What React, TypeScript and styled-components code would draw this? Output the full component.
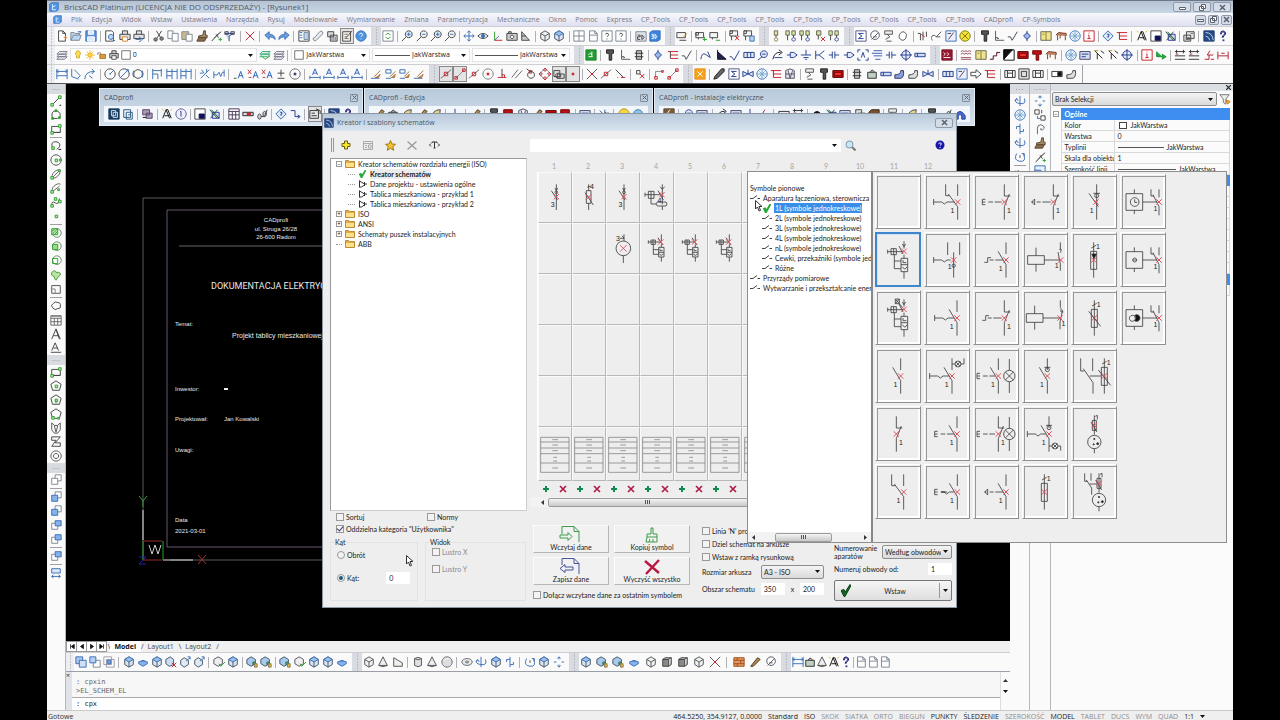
import React from 'react';
import styled, { createGlobalStyle, css } from 'styled-components';

const Global = createGlobalStyle`
  * { box-sizing: border-box; }
  body { margin: 0; background: #000; font: 7px/10px "Open Sans", "Noto Sans", sans-serif; color: #333; overflow: hidden; }
  button, input, select { font: inherit; color: inherit; margin: 0; padding: 0; border: 0; background: none; border-radius: 0; }
  svg { display: block; flex: none; }
`;
const dialogFont = 'Lato, "Liberation Sans", Arial, sans-serif';

/* ---------- Toolbar glyphs, drawn on a 14 x 14 field: [path, stroke, fill] ---------- */
type Part = [string, string, string?];
const K = '#444', B = '#3a6fb5', N = '#223f8f', R = '#c8202c', GR = '#2fa02f', Y = '#e8b93c', S = '#7d8794', LB = '#bcd6f2';
const n = 'none';
const glyphs: Record<string, Part[]> = {
  new: [['M3 1h5l3 3v9h-8zM8 1v3h3', K, '#fff'], ['M9 9l4 0M11 7v4', '#e07b1c']],
  open: [['M1 12V3h4l1 1h5v2M1 12l3-6h9l-2 6z', S, LB], ['M9 2h4l-2 2', B]],
  save: [['M1 1h12v12H1z', B, '#5b93d8'], ['M4 1h6v4H4zM3 8h8v5H3z', '#fff', '#dbe9fa']],
  preview: [['M2 1h7l2 2v10H2z', K, '#fff'], ['M8 5a3 3 0 1 0 .1 0M10 10l3 3', B, LB]],
  print: [['M4 5V1h6v4M1 5h12v6H1z', K, '#dde1e6'], ['M4 8h6v5H4z', '#d9822b', '#fff']],
  plot: [['M4 5V1h6v4M1 5h12v5H1z', K, '#dde1e6'], ['M3 11h6M7 8l4 3-4 3', B]],
  cut: [['M4 1l5 8M10 1L5 9', K], ['M3 9a2 2 0 1 0 .1 0M10 8a2 2 0 1 0 .1 0', K, '#888']],
  copy: [['M1 1h6v9H1z', S, '#fff'], ['M6 4h7v9H6z', S, '#fff']],
  paste: [['M1 2h8v9H1z', S, '#cdb98c'], ['M6 5h7v8H6z', S, '#fff']],
  brush: [['M9 1l2 0v5h2v3H3V7l5-1z', '#5a4633', '#a58a6a'], ['M3 9h9l-2 4H1z', '#5a4633', '#8b6c4b']],
  eyedrop: [['M13 2L8 6l-6 7M7 5l3 4', K, K], ['M10 11h4M12 9v4', GR]],
  selsim: [['M1 2h4v3H1zM8 2h4v3H8zM1 4h10L6 7v6', '#446', LB]],
  filter: [['M1 2h11L8 7v6l-3-2V7z', '#777', '#eee'], ['M8 8l5 2-3 3z', '#c87a1c', Y]],
  del: [['M2 2l10 10M12 2L2 12', R]],
  undo: [['M1 6l5-4v3c4 0 7 2 7 6-2-2-4-3-7-3v3z', B, '#6ca0dd']],
  redo: [['M13 6L8 2v3c-4 0-7 2-7 6 2-2 4-3 7-3v3z', B, '#6ca0dd']],
  prop: [['M1 1h12v12H1z', K, '#fff'], ['M2 3h3M2 6h3M2 9h3', B], ['M7 3h5v8H7z', S, LB]],
  clip: [['M3 9l6-7a2 2 0 0 1 3 3l-7 7a2 2 0 0 1-3-3z', S, '#e8eaed']],
  sheet: [['M2 2h7v6H2zM5 6h8v7H5z', K, '#ddd'], ['M7 8v4M9 8v4M11 8v4', S]],
  note: [['M2 2h9v11H2z', K, '#f4f4f4'], ['M4 5h4M4 8h3M4 10h5', '#775'], ['M13 1L6 9', '#543']],
  help: [['M7 1a6 6 0 1 0 .1 0', B, '#4f93e0'], ['M5 5q2-3 4 0q0 1-2 3M7 10v1', '#fff']],
  refresh: [['M1 1h12v12H1z', S, '#fff'], ['M4 6q3-4 6 0M10 8q-3 4-6 0', GR]],
  zoom: [['M9 1a4 4 0 1 0 .1 0M6 8l-5 5', K, '#dce9f8'], ['M7 5h4M9 3v4', B]],
  zoomo: [['M9 1a4 4 0 1 0 .1 0M6 8l-5 5', K, '#f4f7fa'], ['M7 5h4', B]],
  pan: [['M7 1v12M1 7h12M5 3l2-2 2 2M5 11l2 2 2-2M3 5L1 7l2 2M11 5l2 2-2 2', B]],
  eye: [['M1 7q6-6 12 0q-6 6-12 0', K, '#fff'], ['M7 5a2 2 0 1 0 .1 0', B, B]],
  ucs: [['M3 12V2', GR], ['M3 12h9', R], ['M3 12l5-5', B]],
  cam: [['M1 4h12v8H1zM3 4V2h3v2', K, '#ccc'], ['M7 6a2 2 0 1 0 .1 0', K, '#fff']],
  camd: [['M2 12V2l9 10zM2 7h5', K, '#ccc']],
  cube: [['M7 1l5 3v6l-5 3-5-3V4z', '#555', '#eef1f4'], ['M2 4l5 3 5-3M7 7v6', '#555']],
  cubeb: [['M7 1l5 3v6l-5 3-5-3V4z', '#456', '#dce6f3'], ['M2 4l5-3 5 3-5 3z', B, '#9dc0ea'], ['M7 7v6', '#456']],
  cubec: [['M6 1l5 3v5l-5 3-5-3V4z', '#456', '#a9c8ef'], ['M8 7h3v3H8z', '#375', '#4a9a5a'], ['M10 9h3v4h-3z', '#875', Y]],
  cubex: [['M6 1l4 3v6l-5 2-4-3V4z', '#456', '#cdddf2'], ['M8 8l5 5M13 8l-5 5', R]],
  cubeg: [['M6 1l5 3v5l-5 3-5-3V4z', '#556', '#eee'], ['M7 9l2 3 5-5', GR]],
  cubea: [['M6 2l5 3v5l-5 3-4-3V5z', '#456', '#e2eaf4'], ['M8 6l5-4M10 1h3v3', B]],
  win: [['M1 1h12v12H1zM7 1v12M1 7h12', S, '#fff']],
  page: [['M3 1h6l3 3v9H3zM3 6h9M9 1v3h3', S, '#fff']],
  ask: [['M1 1h12v12H1z', S, '#fff'], ['M5 5q2-3 4 0q0 1-2 3M7 10v1', K]],
  d2: [['M1 2h12v11H1z', S, '#dfe3e8'], ['M3 6h3v2H3v3h3M8 6v5q5-2 0-5', K]],
  d3: [['M1 3l3-2h9v10l-3 2H1z', B, '#3c84dc'], ['M3 5h2v5H3M3 7h2M7 5v5q4-2 0-5', '#fff']],
  brand: [['M1 3l3-2h9v10l-3 2H1z', B, '#4f96e8'], ['M5 3v8h5M5 7l4-2', '#fff']],
  layp: [['M1 3h10v6H1zM4 12h8', K, '#f6f6f6'], ['M8 9l5-5', '#c89138']],
  laya: [['M1 3h9v6H1zM1 3h3v3H1zM4 9v2', K, '#f6f6f6'], ['M9 11h5M11 8v5', GR]],
  laym: [['M1 3h9v6H1zM4 9v2', K, '#f6f6f6'], ['M8 12h5', GR]],
  layx: [['M1 1h9v6H1zM1 1h3v3H1M3 7v5', K, '#f6f6f6'], ['M7 7l5 5M12 7l-5 5', R]],
  layb: [['M1 1h9v6H1zM1 1h3v3H1M3 7v5', K, '#f6f6f6'], ['M8 7h5v6H8z', B, LB]],
  attach: [['M5 1h4v5H5z', '#665', '#eee5a0'], ['M7 6v3', K], ['M7 9a2 2 0 1 0 .1 0', '#874', '#fff']],
  attach2: [['M1 1h4v5H1zM8 1h4v5H8z', '#665', '#d6e8a8'], ['M3 6v6M10 6v3', K], ['M10 9a2 2 0 1 0 .1 0', N, '#fff']],
  attachx: [['M3 1h5v5H3z', '#665', '#cfe2a0'], ['M5 6v5', K], ['M8 8l5 5M13 8l-5 5', R]],
  sigma: [['M1 1h12v12H1z', '#558', '#fff'], ['M10 4H4l4 3-4 3h6', N]],
  gauge: [['M7 1a5 5 0 1 0 .1 0M3 11l8-8M5 8h4', '#556', '#fff']],
  mesh: [['M2 1h9v4H2zM5 5l3 3-5 3M4 13h6', '#555', '#eee']],
  mask: [['M3 5q4-6 8 0q0 7-5 7q-5-2-3-7', '#555', '#fff']],
  wire: [['M1 4h3v8M7 2v10M11 2v6', K], ['M5 5l4 3', R]],
  spoon: [['M2 12a3 3 0 1 1 4-4L12 2M6 8h5', '#555', '#fff']],
  tag: [['M1 1h12v12H1z', B, '#eef'], ['M4 11l6-8M3 4h4', K]],
  lampy: [['M7 1a6 6 0 1 0 .1 0', '#770', '#f6e23a'], ['M3 3l8 8M11 3l-8 8', '#770']],
  bolt: [['M3 1h8v4H9v8H6V5H3z', '#222', '#555']],
  angle: [['M3 1v11h10M5 10h2M3 9h3', '#555']],
  tick: [['M1 8h3l2 4L12 2', '#445']],
  dia: [['M7 1v12', N], ['M7 3l4 4-4 4-4-4z', N, '#9db7e8']],
  yel: [['M1 2h12v10H1z', '#665', '#efe48a'], ['M7 2v10M3 5h2', '#874']],
  table: [['M1 6l3-3 9 1v3M3 6v6M12 7v5M6 6v4', '#7a3b22', '#c08060']],
  fan: [['M7 1a6 6 0 1 0 .1 0', B, '#eaf3fb'], ['M7 2v10M2 7h10M4 4l6 6M10 4l-6 6', '#7aa6cc']],
  info: [['M1 1h12v12H1z', R, '#fff'], ['M7 3v1M6 6h1v4M5 10h4', R]],
  qdia: [['M7 1l6 6-6 6-6-6z', B, '#dbe8f7'], ['M6 5h2v2H7v2', N]],
  lines: [['M1 3h12M4 7h9M4 11h9', R], ['M4 3v8', K]],
  A: [['M2 12L6 2h2l4 10M4 9h6M6 2l4 10', '#111'], ['M1 1l2 2M13 1l-2 2', Y]],
  pip: [['M1 1h12v12H1z', K, '#fff'], ['M6 7h6v5H6z', '#115', '#115']],
  xls: [['M5 5h8v7H5z', '#33a', '#dde'], ['M2 2l9 10M4 2l9 10M11 2L3 12', '#175a34']],
  calc: [['M4 2h9v8H4zM1 6h8v7H1z', '#444', '#e6e6e6'], ['M9 4h3M3 9h5M3 11h5', '#666']],
  logo: [['M1 1h12v12H1z', '#1f3b70', '#264a86'], ['M3 3q8 0 9 9M3 7q4 1 5 5', '#c6d6ee']],
  q: [['M4 5q0-4 3-4q4 1 3 4q-3 2-3 4M7 11v2', '#1a1a70'], ['M5 5q0-3 2-3q3 1 2 3q-3 1-3 4M8 11v2', '#1a1a70']],
  layers: [['M4 3h9l-3 3H1zM4 6h9l-3 3H1zM4 9h9l-3 3H1z', '#778', '#f1f3f5']],
  layg: [['M4 3h9l-3 3H1zM4 6h9l-3 3H1z', '#3a7', '#dff2e3'], ['M4 9l3 3 6-4', GR]],
  bulb: [['M7 1a4 4 0 0 1 2 7v3H5V8a4 4 0 0 1 2-7', '#c9971a', '#ffe14d']],
  sun: [['M7 0v14M0 7h14M2 2l10 10M12 2L2 12', '#f0b030'], ['M7 4a3 3 0 1 0 .1 0', '#e8a820', '#ffd83a']],
  lock: [['M1 7V4h4v3', '#777'], ['M4 6h8v6H4z', '#a26d1d', '#d69c3f']],
  printer: [['M4 5V1h6v4M1 5h12v6H1z', '#333', '#ccc'], ['M4 8h6v5H4z', '#333', '#fff']],
  sw: [['M1 1h12v12H1z', '#555', '#fff']],
  dim: [['M1 1v12M13 1v12M1 4h12M3 2L1 4l2 2M11 2l2 2-2 2M1 9h12', B]],
  dima: [['M2 1v9l8 3M5 2l7 7-3 3', B]],
  dimr: [['M1 13q0-9 11-9M9 1l3 3-3 3M6 9l4 3', B]],
  rad: [['M7 1a6 6 0 1 0 .1 0', K], ['M7 7l4-4M7 6v2', B]],
  diam: [['M7 1a6 6 0 1 0 .1 0', K], ['M2 12L12 2M9 2h3v3', B]],
  jog: [['M7 2a5 5 0 1 0 .1 0', K], ['M2 3q-2 4 0 8M12 3q2 4 0 8', B]],
  base: [['M2 1v12M2 3h10M2 7h6M12 1v9M8 7v6', B]],
  base2: [['M1 1v12M7 1v12M13 1v12M1 4h12M1 9h6', B]],
  brk: [['M2 12L12 2M3 2l3 4M8 8l4 4M9 1v4M1 6h4', B]],
  brk2: [['M1 4v8M13 2v8M1 8h4l2-3 2 5 2-5h2', B]],
  txt: [['M6 12l3-8 3 8M7 9h4', '#2b63b8'], ['M1 12h3', K]],
  txts: [['M7 12l3-8 3 8M8 9h4', '#2b63b8'], ['M1 2l4 5M5 2L1 7M2 11h3', '#b34']],
  pm: [['M7 2v8M3 6h8M3 12h8', K]],
  dot: [['M7 1a6 6 0 1 0 .1 0', '#777'], ['M6 6h2v2H6z', R, R]],
  dotk: [['M7 1a6 6 0 1 0 .1 0', '#666'], ['M6 6h2v2H6z', '#335', '#335']],
  dimt: [['M4 8l3-7 3 7M5 6h4', '#2b63b8'], ['M1 9v4M13 9v4M1 11h12', B]],
  paint: [['M1 12h10', B], ['M5 10l7-7M6 11h4l2-4', '#a06a3a', '#c98a50']],
  paint2: [['M1 12h6M1 2h6v4H1z', B], ['M6 10l6-6M7 11h4l1-4', '#a06a3a', '#c98a50']],
  snap: [['M1 12L13 2', '#666'], ['M5 5h4v4H5z', R]],
  snape: [['M2 12L12 2', '#888'], ['M1 10h3v3H1zM10 1h3v3h-3z', R]],
  perp: [['M7 1v10', K], ['M2 11h10M7 8h3v3', R]],
  par: [['M1 11L8 2M5 12l8-9', '#666']],
  tan: [['M7 4a4 4 0 1 0 .1 0M2 1l5 4', K], ['M5 3h3v3H5z', R]],
  quad: [['M7 2a5 5 0 1 0 .1 0', '#888'], ['M7 0l2 2-2 2-2-2zM7 10l2 2-2 2-2-2zM2 5l2 2-2 2-2-2zM12 5l2 2-2 2-2-2z', R]],
  cross: [['M1 1l12 12M13 1L1 13', '#555'], ['M5 5l4 4M9 5l-4 4', R]],
  ins: [['M1 3h7v7H1zM6 6a3 3 0 1 0 .1 0M5 7h8v5H5z', K, '#ddd']],
  pt: [['M6 6h2v2H6z', R, R]],
  ext: [['M2 2l9 9', K], ['M8 11h5M4 11h1', R]],
  track: [['M3 11V4h8', '#888'], ['M2 10h3v3H2zM10 3h2v2h-2z', R]],
  nosn: [['M3 3h4v4H3z', K], ['M7 7l5 5M12 7l-5 5', R]],
  orange: [['M1 1h12v12H1z', '#e8901a', '#f6a21d'], ['M4 4l6 6M10 4l-6 6', '#fff']],
  green: [['M1 1h12v12H1z', '#1d8a2a', '#239a33'], ['M4 9h5M8 3v6M4 7q3-4 4 0', '#fff']],
  beam: [['M1 13l4-1L13 4V1h-3L2 10z', '#222', '#666']],
  house: [['M2 3l5-2 5 2v9H2zM2 7h10M5 3l2 9 3-9', '#556', '#dde']],
  tie: [['M1 4l12 6V4L1 10z', N, '#dfe6fa'], ['M7 7V2', N]],
  steps: [['M1 12q1-8 5-6l6 4M9 3l3 7', N]],
  tri: [['M3 1v11h10L3 3', '#113', '#224']],
  sqrt: [['M1 9h2l3 4 6-11', N]],
  box3: [['M1 4h12v6H1zM5 4v6M9 4v6', N, '#dfe6f6']],
  arc: [['M1 12q2-9 9-8M8 1l4 3-4 3', '#223'], ['M3 10h9', N]],
  motor: [['M8 2a4 4 0 1 0 .1 0M6 9l-5 4M6 6h4', N, '#e2e8fa']],
  plug: [['M1 7h4M5 4v6h4l4-3-4-3z', N, '#e2e8fa']],
  gnd: [['M7 1v6M1 7h12M4 10h6M6 12h2', N]],
  fork: [['M2 2v10M2 7h4l6-5M6 7l6 5', N]],
  cap: [['M1 7h4M5 3v8M8 3v8M8 7h5', N]],
  rows: [['M3 2h10M1 5h12M3 8h10M5 12h6', '#3a58b8']],
  dash: [['M1 4V1h3M10 1h3v3M13 10v3h-3M4 13H1v-3M5 10l2-6 2 6', N]],
  tube: [['M1 5h12v4H1zM4 5v4', N, '#cdd9f5']],
  target: [['M7 2a5 5 0 1 0 .1 0M7 0v14M0 7h14', N, '#e6ebfa']],
  dark: [['M1 1h12v12H1z', '#7a1428', '#94182f'], ['M3 4l2 2-2 2M7 4l2 2-2 2M3 10h8', '#fff']],
  waves: [['M1 3l2-1 2 1 2-1 2 1 2-1 2 1M1 6l2-1 2 1 2-1 2 1 2-1 2 1M1 10h12M1 12h12', '#a05060']],
  stair: [['M1 12h4V8h4V4h4', '#512', '#ddc']],
  bw: [['M1 1h12v12H1z', '#111', '#fff'], ['M1 1h10L1 12z', '#111', '#111']],
  redb: [['M1 3h12v8H1z', '#500', '#c11'], ['M3 5h8v4H3z', '#700', '#e33']],
  redT: [['M2 2h10v4H9v7H6V6H2z', '#700', '#b11']],
  dial: [['M1 3h12v9H1z', '#446', '#d7e0f3'], ['M3 6h8M3 9h5', N]],
  pointer: [['M2 2l9 9M5 12V5M9 2l4 3', '#222'], ['M2 2h4', '#b80']],
  garr: [['M2 3v6h7M8 6l5 3-5 3', '#168a30', '#2a4']],
  dimk: [['M1 3h12M1 8h12M1 12h12M3 1v4M11 1v4', '#333'], ['M2 6h3', R]],
  dimred: [['M1 3v9M13 3v9M1 8h12M5 5h4', '#b02030']],
  pyr: [['M8 2L5 7M5 7h7M2 12h5M9 12h4M7 7v5', '#b02030']],
  valve: [['M4 2h6v10H4zM2 5h10M2 9h10', '#333', '#ccc']],
  bag: [['M2 5h10v7H2zM5 5q2-5 5 0', '#333', '#bfcfc4']],
  pipe: [['M1 12h7q4-1 3-9H8q0 5-7 5z', '#336', '#8aa0dd']],
  pipek: [['M1 12h7q4-1 3-9H8q0 5-7 5z', '#444', '#ddd']],
  arrow: [['M1 5h6V2l6 5-6 5V9H1z', '#444', '#fff']],
  rect: [['M1 4h12v6H1z', '#333', '#eee']],
  rect2: [['M1 3h12v8H1zM4 6h6M4 3v8M10 3v8', '#333', '#fff']],
  frame: [['M1 1h12v12H1zM4 4h6v6H4z', '#444', '#ddd']],
  rectk: [['M1 4h12v6H1z', '#333', '#fff'], ['M8 5h4v4H8z', '#111', '#111']],
  num: [['M7 1a6 6 0 1 0 .1 0', '#558', '#eef'], ['M6 4h1v6', N]],
  navy: [['M1 1h12v12H1z', '#163a5e', '#163a5e'], ['M4 3h5v6H4zM6 5h5v6H6z', '#cfe2f4']],
  sheets: [['M2 2h8v9H2zM5 5h7v8H5z', '#2d5a80', '#eef4fa'], ['M7 8h3', B]],
  db: [['M2 2h8v6H2zM6 6h7v6H6z', '#546', '#a99ab8'], ['M2 11h4', '#111']],
  grid: [['M1 1h12v12H1zM1 4h12M5 4v9M9 4v9M1 8h12', '#435', '#fff']],
  red: [['M1 5h12v4H1z', '#222', '#ddd'], ['M6 6h4v2H6z', R, R]],
  glasses: [['M4 7a2 3 0 1 0 .1 0M10 4a2 3 0 1 0 .1 0M6 10h4l3-8', '#444', '#ccd']],
  conn: [['M2 3h5v7h5M10 8l3 2-3 2', N]],
  house2: [['M1 3h10v9H1zM3 6h4M3 9h6M8 1l5 2v4', '#333', '#e8e8e8']],
  pen: [['M2 12L10 2l3 2-8 8z', '#432', '#b48a45']],
  leaf: [['M2 11q1-9 10-9q0 8-8 8', '#445', '#e7d680']],
  smile: [['M7 1a6 6 0 1 0 .1 0', '#b80', '#f8d840'], ['M4 8q3 3 6 0', '#850']],
  swirl: [['M7 2a5 4 0 1 0 .1 0', '#37a', '#8cc4ea']],
  wrench: [['M2 12l7-7M8 2l0 4 5 0M2 3l3 3', '#357']],
  blackh: [['M1 9q6-10 12 0z', '#111', '#111']],
  flash: [['M1 1h12v12H1z', '#5a4228', '#7c5c36'], ['M8 2L4 8h5l-3 4', '#fff']],
  roof: [['M1 9q6-10 12 0v4h-4V8H5v5H1z', '#24a', '#4a6ad0']],
  brown: [['M1 5l3-3h9v8l-3 3H1z', '#3a2a18', '#7a4f2c']],
  line: [['M3 11L11 3', K], ['M1 10h3v3H1zM10 1h3v3h-3z', GR, '#bfeab4'], ['M11 12h2', '#111']],
  poly: [['M3 11Q0 2 8 2q6 3 3 8M3 11h6', K], ['M2 10h2v2H2zM10 9h2v2h-2zM6 1h2v2H6z', GR, GR]],
  rct: [['M2 11V4h10v7zM2 11h10', K], ['M1 10h3v3H1zM10 2h3v3h-3z', GR, '#bfeab4']],
  arcg: [['M3 9Q0 2 7 2q6 1 4 6l-3 3', K], ['M2 8h3v3H2z', GR, '#bfeab4'], ['M10 11h3', '#111']],
  circ: [['M7 1a6 6 0 1 0 .1 0', K], ['M6 6h3v3H6zM11 6h2v2h-2z', GR, '#bfeab4']],
  ell: [['M3 11q-2-4 4-8q5-2 5 1q0 4-5 7-3 2-4 0M3 11l8-8', '#666'], ['M1 10h3v3H1zM10 2h2v2h-2z', GR, '#bfeab4']],
  ella: [['M3 11q-2-4 4-8q5-2 5 0M3 11l8-6', '#666'], ['M1 10h3v3H1zM9 8h2v2H9z', GR, '#bfeab4']],
  spl: [['M2 11q0-6 4-3t5-5', K], ['M1 10h3v3H1zM5 2h3v3H5zM10 5h3v3h-3z', GR, '#bfeab4']],
  gdot: [['M6 6h3v3H6z', GR, '#bfeab4']],
  hatch: [['M8 2a5 5 0 1 0 .1 0', '#686', '#fff'], ['M2 2h7v7H2zM2 5l4-3M2 9l7-7M5 9l4-4', GR, '#c5e8b8']],
  hatch2: [['M8 1a5 5 0 1 0 .1 0', '#686', '#eef8ea'], ['M3 4h6v6H3z', GR, '#9fd88c']],
  hatch3: [['M8 1a5 5 0 1 0 .1 0', '#686', '#fff'], ['M3 4h6v6H3z', GR]],
  blob: [['M2 4q4-4 5 0q6-1 5 3q-3 2-5 6q-2-1-2-4-4-1-3-5', '#4a9a3a', '#b7e6a4']],
  wipe: [['M2 3h10v9H2z', '#555'], ['M1 7h5M6 12V7', S]],
  cloud: [['M3 9q-3-3 1-5q2-3 5-1q4 0 3 4q1 3-3 3-3 3-6-1', K]],
  tbl: [['M1 2h12v11H1zM1 5h12M5 5v8M9 5v8M1 9h12', '#666', '#fff'], ['M1 3h12', '#888']],
  bigA: [['M2 13L7 1l5 12M4 9h6M7 2l4 11', '#444']],
  bigU: [['M2 10L6 1l4 9M4 7h5M1 12h12', '#444']],
  pent: [['M7 1l6 4-2 7H3L1 5z', K], ['M6 6h3v3H6z', GR, '#bfeab4']],
  pent2: [['M7 1l6 4-2 7H3L1 5z', K], ['M7 6v5M6 6h3v3H6z', GR]],
  pent3: [['M7 1l6 4-2 7H3L1 5z', K], ['M2 10h3v3H2zM9 11h2v2H9z', GR, '#bfeab4']],
  pig: [['M2 1l3 3h4l3-3v8l-3 4H5L2 9zM5 4l2 8 2-8', '#555']],
  zed: [['M2 1h10L6 8h6v4H2l5-7H2z', '#444']],
  donut: [['M7 1a6 6 0 1 0 .1 0M7 4a3 3 0 1 0 .1 0', '#555']],
  ord: [['M6 1h7v7H6z', S, '#fff'], ['M2 5h7v7H2z', S, '#fff']],
  ordb: [['M6 1h7v7H6z', S, '#fff'], ['M2 5h7v7H2z', B, '#86b4ea']],
  ordt: [['M2 5h7v7H2z', S, '#fff'], ['M6 2h7v6H6z', B, '#86b4ea']],
  abc: [['M2 2h10v5H2zM2 11h10M4 9l-2 2 2 2M10 9l2 2-2 2', B, '#dbe9fb']],
  union: [['M1 1h8v8H1z', B, '#a9c8ef'], ['M5 5h8v8H5z', B, '#cfe0f6']],
  subt: [['M5 5h8v8H5z', S, '#fff'], ['M1 1h7v7H1z', B, '#b5d0f2']],
  inter: [['M1 1h9v9H1zM4 4h9v9H4z', '#99a', '#fff'], ['M5 5h4v4H5z', B, '#6fa3e2']],
  cone: [['M7 1l5 10H2z', '#555', '#eee'], ['M2 11q5 3 10 0', '#555']],
  wedge: [['M2 2l10 6v4H2z', '#555', '#eee']],
  cyl: [['M3 3q4-3 8 0v8q-4 3-8 0z', '#555', '#dfe2e5'], ['M3 3q4 3 8 0', '#555']],
  sph: [['M7 1a6 6 0 1 0 .1 0', '#666', '#dcdfe2'], ['M4 5q2-3 5-2', '#fff']],
  tor: [['M7 3a6 4 0 1 0 .1 0M7 6a2 1 0 1 0 .1 0', '#666', '#e6e8ea']],
  slab: [['M2 7l5-2 5 2-5 3z', B, '#5b93d8'], ['M2 7v2l5 3 5-3V7', B, '#86b4ea']],
  brick: [['M1 2h12v10H1zM1 5h12M1 9h12M5 2v3M9 5v4M5 9v3', '#a44a20', '#e09a60']],
  cubed: [['M2 4h7v8H2z', '#444', '#888'], ['M2 4l3-2h7l-3 2zM12 2v8l-3 2', '#444', '#bbb']],
  rot: [['M7 1v12M3 4q-4 5 4 6t5-6M1 7l2-3 2 3', B]],
  rot2: [['M3 3q-4 8 4 9t4-9M9 3h3v3', B], ['M7 5v3', K]],
  mir: [['M7 1v12M7 4H3v3M7 10h4V7', B]],
  arr4: [['M7 1v3M7 10v3M1 7h3M10 7h3M5 3l2-2 2 2M5 11l2 2 2-2', B]],
  cpy: [['M1 1h5v5H1zM8 8h5v5H8zM9 1v4', K, '#fff'], ['M4 8v3h3', B]],
  offs: [['M4 13V6q0-4 4-4 4 1 4 4-2 3-4 2V6', '#567']],
  rsz: [['M1 1h12v12H1z', B, '#e8f1fc'], ['M1 6h7v7H1z', B, '#a6c7ef']],
  hook: [['M3 5q2-4 4 0v4q3 4 5 0M2 3v8', B]],
};

const Glyph = ({ name, size = 12 }: { name: string; size?: number }) => (
  <svg width={size} height={size} viewBox="0 0 14 14" aria-hidden="true">
    {(glyphs[name] || []).map(([d, s, f], i) => (
      <path key={i} d={d} stroke={s} fill={f || n} strokeWidth="1.1" />
    ))}
  </svg>
);

/* ---------- Toolbars ---------- */
const bg = '#fafafa';
const Bar = styled.div<{ $w?: number; $end?: boolean }>`
  display: flex;
  align-items: center;
  flex: ${p => (p.$w ? `0 1 ${p.$w}px` : '1 1 0')};
  min-width: 0;
  height: 100%;
  background: ${bg};
  border-right: ${p => (p.$end ? '1px solid #a0a4aa' : '0')};
`;
const Items = styled.div`
  display: flex;
  flex: 1;
  min-width: 0;
  align-items: center;
  justify-content: space-between;
  padding: 0 4px 0 1px;
`;
const Grip = styled.span<{ $tint?: boolean; $flat?: boolean }>`
  flex: none;
  ${p => p.$flat
    ? css`height: 10px; width: 100%; background: radial-gradient(circle, #999 0 1px, transparent 1px) center / 3px 3px repeat-x #d8dbe0; border: solid #d8dbe0; border-width: 0 4px;`
    : css`align-self: stretch; width: ${p.$tint ? 10 : 8}px; background: radial-gradient(circle, #999 0 1px, transparent 1px) center / 3px 3px repeat-y ${p.$tint ? '#d8dce2' : '#eceef1'};`}
`;
const Sep = styled.span`
  width: 1px;
  height: 11px;
  margin: 0 1px;
  background: #b0b0b4;
  flex: none;
`;
const Tool = styled.button<{ $on?: boolean }>`
  display: grid;
  place-items: center;
  flex: none;
  width: 12px;
  height: 14px;
  ${p => p.$on && css`outline: 1px solid #888; background: #e4e4e4;`}
`;
const Tools = ({ list }: { list: string }) => (
  <>
    {list.split(' ').map((t, i) =>
      t === '|' ? <Sep key={i} /> : (
        <Tool key={i} type="button" aria-label={t.replace('!', '')} $on={t.endsWith('!')}>
          <Glyph name={t.replace('!', '')} />
        </Tool>
      ))}
  </>
);
const ToolBar = ({ list, w, tint = true, end }: { list: string; w?: number; tint?: boolean; end?: boolean }) => (
  <Bar $w={w} $end={end}>
    <Grip $tint={tint} />
    <Items><Tools list={list} /></Items>
  </Bar>
);

/* ---------- Application frame ---------- */
const Frame = styled.main`
  display: flex;
  flex-direction: column;
  height: 100vh;
  margin: 0 47px;
  background: ${bg};
  overflow: hidden;
`;
const TitleBar = styled.header`
  display: flex;
  align-items: center;
  gap: 5px;
  height: 13px;
  flex: none;
  padding: 0 2px;
  background: linear-gradient(#b4c2d2, #c9d6e4);
  border-top: 1px solid #6d7788;
  color: #4f5a68;
  font-size: 8px;
`;
const Title = styled.h1`
  margin: 0;
  flex: 1;
  font: inherit;
`;
const WinButton = styled.button<{ $w?: number }>`
  display: grid;
  place-items: center;
  width: ${p => p.$w || 18}px;
  height: 10px;
  border: 1px solid #8f9aaa;
  border-radius: 2px;
  background: #d3dce7;
`;
const WinGlyph = ({ kind }: { kind: string }) => (
  <svg width="7" height="7" viewBox="0 0 7 7" fill="#fff" stroke="#59636f" aria-hidden="true">
    {kind === 'min' && <path d="M.5 3.500h6v2h-6z" />}
    {kind === 'max' && <path d="M2.500.5h4v4h-4zM.5 2.500h4v4h-4z" />}
    {kind === 'close' && <path d="M1 1l5 5M6 1L1 6" strokeWidth="1.500" />}
  </svg>
);
const MenuBar = styled.nav`
  display: flex;
  align-items: center;
  gap: 9px;
  height: 13px;
  flex: none;
  padding: 0 1px 0 6px;
  background: linear-gradient(#f7f8fc, #dfe0f1);
  a { color: #77777f; text-decoration: none; white-space: nowrap; }
`;
const Push = styled.span`flex: 1;`;
const MdiButtons = styled.span`
  display: flex;
  gap: 2px;
`;
const Row = styled.div`
  display: flex;
  flex: none;
  height: 19px;
  border-top: 1px solid #cfcfd3;
  background: ${bg};
`;
const Body = styled.div`
  position: relative;
  display: flex;
  flex: 1;
  min-height: 0;
  border-top: 1px solid #55585c;
`;
const SideBar = styled.div<{ $w: number }>`
  display: flex;
  flex-direction: column;
  align-items: center;
  flex: none;
  width: ${p => p.$w}px;
  background: ${bg};
  border-right: 1px solid #b5b8bc;
`;
const SideSep = styled.span`
  width: 12px;
  height: 1px;
  margin: 1px 0;
  background: #a0a0a4;
`;
const SideList = ({ list }: { list: string }) => (
  <>
    {list.split(' ').map((t, i) =>
      t === '~' ? <Grip key={i} $flat /> : t === '|' ? <SideSep key={i} /> : (
        <Tool key={i} type="button" aria-label={t}><Glyph name={t} /></Tool>
      ))}
  </>
);

const Center = styled.div`
  display: flex;
  flex-direction: column;
  flex: 1;
  min-width: 0;
`;
const Canvas = styled.section`
  flex: 1;
  min-height: 0;
  background: #000;
  overflow: hidden;
`;
const Tabs = styled.div`
  display: flex;
  align-items: center;
  height: 11px;
  flex: none;
  background: #f0f0f0;
  font-size: 7px;
`;
const TabNav = styled.button`
  width: 11px;
  height: 11px;
  margin-right: -1px;
  border: 1px solid #999;
  background: #fff;
  display: grid;
  place-items: center;
`;
const Tab = styled.button<{ $on?: boolean }>`
  height: 11px;
  padding: 0 5px 0 4px;
  font-weight: ${p => (p.$on ? 700 : 400)};
  color: ${p => (p.$on ? '#111' : '#444')};
  background: ${p => (p.$on ? '#fff' : 'none')};
`;
const Console = styled.section`
  display: flex;
  flex: none;
  height: 39px;
  border-top: 1px solid #9aa0a6;
`;
const ConsoleGrip = styled.div`
  display: flex;
  flex-direction: column;
  width: 6px;
  background: #dfe2e6;
  font-size: 7px;
  line-height: 7px;
`;
const ConsoleText = styled.div`
  display: flex;
  flex-direction: column;
  flex: 1;
  min-width: 0;
  font: 7px/9px "DejaVu Sans Mono", "Liberation Mono", monospace;
  color: #666;
  pre { margin: 0; padding: 6px 4px 0; flex: 1; font: inherit; background: #f7f7f7; }
  input { height: 13px; padding: 0 4px; color: #222; background: #fff; border-top: 1px solid #aaa; }
`;
const ConsoleScroll = styled.div`
  display: flex;
  flex-direction: column;
  justify-content: space-between;
  width: 10px;
  padding: 7px 2px 17px;
  border-left: 1px solid #ddd;
`;
const Status = styled.footer`
  display: flex;
  align-items: center;
  gap: 6px;
  height: 10px;
  flex: none;
  padding: 2px 28px 0 1px;
  background: #efefef;
  border-top: 1px solid #c9c9c9;
  white-space: nowrap;
  color: #333;
`;
const Mode = styled.span<{ $off?: boolean }>`color: ${p => (p.$off ? '#8d8d8d' : '#222')};`;

/* ---------- Property panel ---------- */
const Props = styled.aside`
  flex: 0 0 182px;
  min-width: 0;
  background: #fbfbfb;
  font-family: ${dialogFont};
  color: #222;
`;
const PropsHead = styled.div`
  display: flex;
  align-items: center;
  justify-content: flex-end;
  height: 7px;
  background: #dcdfe3;
  padding-right: 2px;
`;
const PropsPick = styled.div`
  display: flex;
  align-items: center;
  gap: 2px;
  padding: 1px 2px 2px 1px;
`;
const Drop = styled.div<{ $w?: number; $flat?: boolean }>`
  display: flex;
  align-items: center;
  gap: 2px;
  flex: ${p => (p.$w ? `0 0 ${p.$w}px` : '1 1 0')};
  min-width: 0;
  height: 14px;
  padding: 0 3px 0 2px;
  border: 1px solid ${p => (p.$flat ? '#e4e4e6' : '#8d8d8d')};
  border-radius: ${p => (p.$flat ? 0 : 2)}px;
  background: ${p => (p.$flat ? '#fff' : 'linear-gradient(#f4f4f4, #dadada)')};
  select { appearance: none; flex: 1; min-width: 0; height: 12px; text-overflow: clip; color: #222; }
  > span { margin: 0; flex: none; }
`;
const Stroke = styled.span<{ $w: number }>`
  display: inline-block;
  width: ${p => p.$w}px;
  height: 1px;
  margin-right: 3px;
  background: #555;
  vertical-align: middle;
`;
const Down = () => (
  <svg width="5" height="3" viewBox="0 0 5 3" aria-hidden="true"><path d="M0 0h5L2.500 3z" fill="#111" /></svg>
);
const Fold = styled.button`
  display: grid;
  place-items: center;
  width: 6px;
  height: 6px;
  border: 1px solid #999;
  background: #fff;
  flex: none;
  font-size: 6px;
  line-height: 4px;
`;
const PropTable = styled.table`
  width: 179px;
  border-collapse: collapse;
  table-layout: fixed;
  line-height: 9px;
  td, th { height: 11px; padding: 0 0 0 3px; border: 1px solid #d9d9d9; overflow: hidden; white-space: nowrap; text-align: left; font-weight: 400; }
  col:nth-child(1) { width: 10px; }
  col:nth-child(2) { width: 53px; }
  td:first-child { border: 0; padding: 0; }
  .group { background: #3d8ef0; color: #fff; font-weight: 700; border-color: #3d8ef0; }
  ${Fold} { margin: 0 auto; }
`;
const Swatch = styled.span`
  display: inline-block;
  width: 8px;
  height: 7px;
  margin: 0 4px 0 1px;
  border: 1px solid #444;
  background: #fff;
  vertical-align: middle;
`;

/* ---------- Floating windows ---------- */
const Floating = styled.section<{ $x: number; $w: number }>`
  position: absolute;
  left: ${p => p.$x}px;
  top: 4px;
  width: ${p => p.$w}px;
  height: 38px;
  padding: 0 4px 4px;
  background: linear-gradient(#b8c9da, #d5e1ee);
  border: 1px solid #e4ebf3;
`;
const FloatTitle = styled.div`
  display: flex;
  align-items: center;
  justify-content: space-between;
  height: 17px;
  color: #445262;
`;
const FloatTools = styled.div`
  display: flex;
  align-items: center;
  justify-content: space-between;
  height: 16px;
  padding: 0 4px;
  background: #f3f6fa;
`;
const Close = styled.button`
  display: grid;
  place-items: center;
  width: 8px;
  height: 8px;
  border: 1px solid #808b98;
  border-radius: 1px;
`;
const FloatBar = ({ x, w, title, list }: { x: number; w: number; title: string; list: string }) => (
  <Floating $x={x} $w={w} aria-label={title}>
    <FloatTitle>{title}<Close type="button" aria-label="Zamknij"><svg width="5" height="5" viewBox="0 0 5 5"><path d="M.5.5l4 4M4.500.5l-4 4" stroke="#5b6672" /></svg></Close></FloatTitle>
    <FloatTools><Tools list={list} /></FloatTools>
  </Floating>
);

/* ---------- Dialog ---------- */
const Dialog = styled.section`
  position: absolute;
  left: 275px;
  top: 29px;
  width: 635px;
  height: 495px;
  display: flex;
  flex-direction: column;
  background: #eeeeee;
  border: 1px solid #8b97a5;
  font-family: ${dialogFont};
  color: #222;
`;
const DialogTitle = styled.header`
  display: flex;
  align-items: center;
  gap: 3px;
  height: 17px;
  flex: none;
  padding: 0 3px 0 1px;
  background: linear-gradient(#b9cadb, #d9e4ef);
  color: #48566a;
  font-family: "Open Sans", sans-serif;
  span { flex: 1; }
`;
const DialogBody = styled.div`
  display: flex;
  flex: 1;
  min-height: 0;
  gap: 3px;
  padding: 7px 4px 6px 7px;
`;
const LeftCol = styled.div`
  display: flex;
  flex-direction: column;
  width: 197px;
  flex: none;
`;
const RightCol = styled.div`
  display: flex;
  flex-direction: column;
  flex: 1;
  min-width: 0;
`;
const DialogTools = styled.div`
  display: flex;
  align-items: center;
  gap: 10px;
  height: 14px;
  margin-bottom: 6px;
  padding-left: 1px;
`;
const Handle = styled.span`
  width: 3px;
  height: 14px;
  margin-right: -4px;
  border: 1px solid #999;
  border-width: 0 1px;
`;
const Tree = styled.ul`
  flex: 1;
  min-height: 0;
  margin: 0;
  padding: 0 5px;
  list-style: none;
  background: #fff;
  border: 1px solid #9a9a9a;
  border-right-color: #ccc;
  border-bottom-color: #ccc;
`;
const TreeRow = styled.li<{ $depth: number; $bold?: boolean }>`
  display: flex;
  align-items: center;
  gap: 3px;
  height: 10px;
  padding-left: ${p => p.$depth * 12}px;
  white-space: nowrap;
  color: #222;
  font-weight: ${p => (p.$bold ? 700 : 400)};
  line-height: 10px;
`;
const TreeLabel = styled.span<{ $sel?: boolean; $soft?: boolean }>`
  ${p => p.$sel && css`background: #3b8ee8; color: #fff; padding: 0 1px; margin-left: -1px;`}
  ${p => p.$soft && css`background: #ececec;`}
`;
const Leaf = styled.span<{ $w?: number }>`
  width: ${p => p.$w || 9}px;
  border-top: 1px dotted #999;
  flex: none;
`;
const Folder = () => (
  <svg width="10" height="8" viewBox="0 0 10 8" aria-hidden="true">
    <path d="M.5 7.500v-7h3l1 1h5v6z" fill="#e3ad4a" stroke="#b98b3a" /><path d="M1 7V3h8v4z" fill="#ffe08a" />
  </svg>
);
const Sym = () => (
  <svg width="9" height="8" viewBox="0 0 9 8" aria-hidden="true"><path d="M1.500 .5v7M1.500 1l5 3M1.500 7h2l3-2M6.500 2v4M7 4h2" fill="none" stroke="#333" /></svg>
);
const Switchy = () => (
  <svg width="10" height="8" viewBox="0 0 10 8" aria-hidden="true"><path d="M0 4.500h3l4-3M7.500 4.500h2.500" fill="none" stroke="#444" strokeWidth="1" /></svg>
);
const Tick = ({ w = 9, h = 8, dark = false }) => (
  <svg width={w} height={h} viewBox="0 0 10 12" aria-hidden="true"><path d="M0 6l3-1 1 3L9 0l1 1-6 11H3z" fill={dark ? '#116b22' : '#1fb32f'} stroke={dark ? '#0a3d14' : '#1a9a2a'} strokeWidth="1" /></svg>
);
const SearchRow = styled.div`
  display: flex;
  align-items: center;
  gap: 4px;
  height: 14px;
  margin-bottom: 8px;
  padding-right: 6px;
`;
const SearchBox = styled.div`
  display: flex;
  align-items: center;
  width: 311px;
  height: 13px;
  padding-right: 4px;
  background: #fff;
  input { flex: 1; min-width: 0; height: 12px; }
`;
const ColHead = styled.div`
  display: grid;
  grid-template-columns: repeat(12, 34px);
  padding-left: 7px;
  height: 12px;
  line-height: 12px;
  text-align: center;
  color: #a5a5a5;
`;
const Board = styled.div`
  display: grid;
  grid-template-columns: repeat(12, 34px);
  grid-template-rows: repeat(5, 51px) 54px;
  margin-left: 7px;
  border-left: 1px solid #fff;
`;
const Slot = styled.div`
  border: 1px solid #b8b8b8;
  border-top-color: #fafafa;
  border-left-color: #fafafa;
  svg { margin: -1px; }
`;
const EditRow = styled.div`
  display: grid;
  grid-template-columns: repeat(12, 34px);
  height: 16px;
  margin-left: 7px;
  align-items: center;
  span { display: flex; justify-content: space-between; padding: 0 4px 0 5px; }
  button { width: 8px; height: 8px; }
`;
const Scroll = styled.div`
  display: flex;
  align-items: center;
  gap: 3px;
  height: 10px;
  flex: none;
  padding-left: 3px;
  background: #f2f2f2;
`;
const Thumb = styled.span<{ $w?: number }>`
  display: grid;
  place-items: center;
  width: ${p => p.$w || 200}px;
  height: 9px;
  border: 1px solid #9c9c9c;
  border-radius: 2px;
  background: linear-gradient(#f4f4f4, #c9c9c9);
`;
const Ribs = () => (
  <svg width="6" height="4" viewBox="0 0 6 4" aria-hidden="true"><path d="M.5 0v4M2.500 0v4M4.500 0v4" stroke="#555" /></svg>
);
const Check = styled.label<{ $off?: boolean }>`
  display: flex;
  align-items: center;
  gap: 2px;
  height: 12px;
  white-space: nowrap;
  color: ${p => (p.$off ? '#8c8c8c' : '#222')};
  input {
    appearance: none; width: 8px; height: 8px; flex: none; display: grid; place-items: center;
    border: 1px solid #999; background: #f3f3f3;
  }
  input[type='radio'] { border-radius: 50%; }
  input[type='checkbox']:checked::after { content: ''; width: 3px; height: 5px; margin-top: -2px; border: solid #333c70; border-width: 0 1px 1px 0; transform: rotate(40deg); }
  input[type='radio']:checked::after { content: ''; width: 4px; height: 4px; border-radius: 50%; background: #1c5a80; }
`;
const Pair = styled.div`
  display: grid;
  grid-template-columns: 91px 1fr;
  padding-left: 6px;
`;
const Groups = styled.div`
  display: grid;
  grid-template-columns: 88px 101px;
  gap: 7px;
  padding-top: 2px;
`;
const Group = styled.fieldset`
  margin: 0;
  min-width: 0;
  height: 64px;
  padding: 0 0 0 6px;
  border: 1px solid #e2e2e2;
  legend { padding: 0; margin-left: -2px; height: 10px; line-height: 10px; }
`;
const GroupRow = styled.div<{ $h?: number }>`
  display: flex;
  align-items: center;
  gap: 27px;
  height: ${p => p.$h || 16}px;
`;
const Num = styled.input`
  width: 24px;
  height: 12px;
  && { padding: 0 0 0 3px; background: #fff; }
  color: #222;
`;
const Lower = styled.div`
  display: flex;
  flex: 1;
  align-items: flex-end;
  gap: 12px;
  padding-left: 3px;
`;
const Actions = styled.div`
  display: grid;
  grid-template-columns: 76px 76px;
  gap: 4px 5px;
  label { grid-column: span 2; }
`;
const Action = styled.button`
  display: flex;
  flex-direction: column;
  align-items: center;
  justify-content: flex-end;
  height: 28px;
  border: 1px solid #b6b6b6;
  border-top-color: #fbfbfb;
  border-left-color: #fbfbfb;
  background: #f1f1f1;
  line-height: 9px;
`;
const Options = styled.div`
  display: flex;
  flex-direction: column;
  width: 122px;
  padding-bottom: 4px;
`;
const Field = styled.div<{ $h?: number }>`
  display: flex;
  align-items: center;
  justify-content: space-between;
  height: ${p => p.$h || 17}px;
  line-height: 8px;
`;
const Finish = styled.div`
  display: flex;
  flex-direction: column;
  flex: 1;
  margin-left: -2px;
`;
const Insert = styled.button`
  display: flex;
  align-items: center;
  height: 21px;
  margin-top: 3px;
  padding: 0 3px 0 6px;
  border: 1px solid #777;
  border-radius: 2px;
  background: linear-gradient(#f6f6f6, #dedede);
  span { flex: 1; text-align: center; }
  i { width: 1px; height: 15px; margin-right: 3px; background: #999; }
`;

/* ---------- Electrical symbols, three units to a pixel ---------- */
type El = React.ReactNode;
const X = ({ x, y = 84 }: { x: number; y?: number }) => (
  <path d={`M${x - 8} ${y - 8}l16 16M${x + 8} ${y - 8}l-16 16`} stroke="#e0505c" strokeWidth="3" />
);
const T = ({ x, y = 116, t = '1' }: { x: number; y?: number; t?: string }) => (
  <text x={x} y={y} fontSize="21" textAnchor="middle" fill="#222" stroke="none">{t}</text>
);
const Ln = ({ d, f = n }: { d: string; f?: string }) => <path d={d} fill={f} />;
const no = (x: number): El => <><Ln d={`M${x} 31V66M${x - 24} 58L${x} 98V137`} /><X x={x} /><T x={x - 16} /></>;
const nc = (x: number): El => <><Ln d={`M${x} 31V66h18M${x + 15} 60L${x} 98V137`} /><X x={x} /><T x={x + 14} /></>;
const co = (x: number): El => <><Ln d={`M${x - 36} 31V65h11M${x - 28} 60L${x} 98V137M${x} 31V66`} /><X x={x} /><T x={x - 16} /></>;
const knob = (x: number, e: number): El => <Ln d={`M${x} 75v18M${x} 84H${x + 24}l8 6l8-6H${e}`} />;
const push = (x: number, e: number): El => <Ln d={`M${x + 9} 76H${x}V92h9M${x} 84h9M${x + 18} 84h14m5 0H${e}`} />;
const pull = (x: number, e: number): El => <Ln d={`M${x + 8} 75q-12 9 0 18zM${x - 3} 84h6M${x + 14} 84h12m5 0H${e}`} />;
const step = (x: number, e: number): El => <Ln d={`M${x} 91h10V77h10M${x + 16} 84h12m5 0H${e}`} />;
const box = (k: string): El => (
  <>
    <Ln d="M18 59h50v50H18zM43 46v13M43 109v11M68 84H112M117 46V70M117 98v26M93 46v20h9M99 62l18 36" />
    {k === 'clock' && <Ln d="M44 71a13 13 0 1 0 .1 0M44 76v9h8" />}
    {k === 'theta' && <Ln d="M44 78a6 6 0 1 0 .1 0M39 84h10" />}
    {k === 'rings' && <><Ln d="M37 76a9 9 0 1 0 .1 0" /><path d="M50 74a10 10 0 1 1-6 18q8-8 0-16z" fill="#111" /></>}
    <X x={117} /><T x={106} y={112} />
  </>
);
const lamp = (x: number, y = 84, r = 17): El => (
  <><circle cx={x} cy={y} r={r} fill="none" /><path d={`M${x - r * .7} ${y - r * .7}L${x + r * .7} ${y + r * .7}M${x + r * .7} ${y - r * .7}L${x - r * .7} ${y + r * .7}`} /></>
);
const fuse = (x: number): El => <><Ln d={`M${x - 9} 58h18v54h-18zM${x} 31V137`} /><X x={x} /><T x={x + 13} y={50} /><Ln d={`M${x - 7} 48l14-8`} /></>;
const motor: El = (
  <>
    <Ln d="M48 50h16v18H48zM56 50v18M38 59H85M38 53v12M87 28v22M82 36l5 8 5-8M72 42l12 24M78 79h20v40H78zM58 68v42H78M58 87H78M87 68v11M87 119v21M78 98h20M84 84v8h10M82 104q8 14 14 0" />
    <X x={87} y={58} />
  </>
);
const relay = (x: number): El => <Ln d={`M${x} 71h50v26H${x}zM${x + 25} 47v24M${x + 25} 97v22M${x + 50} 84H112`} />;
const plugSym = (x: number, y: number): El => (
  <><circle cx={x} cy={y} r="20" fill="none" /><circle cx={x} cy={y - 9} r="2" fill="#111" /><circle cx={x - 2} cy={y + 7} r="2" fill="#111" /><circle cx={x + 10} cy={y + 5} r="3" fill="#111" /></>
);
const mini = (x: number): El => <><Ln d={`M${x - 6} 43h12v30h-12zM${x} 28v58M${x + 3} 31l6-3v12M${x - 10} 48l18 30`} /><X x={x} y={58} /></>;

const palette: (El | null)[][] = [
  [<></>, <>{co(101)}{knob(29, 92)}</>, <>{push(28, 86)}{nc(94)}</>, <>{pull(30, 86)}{nc(94)}</>,
    <><Ln d="M77 31V137M54 58L82 98M67 58h20" /><circle cx="77" cy="65" r="6" fill="none" /><X x={75} /><T x={62} /></>, box('clock')],
  [motor, <>{knob(29, 80)}<Ln d="M71 31v38M89 61v76M107 31v38" /><X x={89} /><T x={77} y={110} /><circle cx="89" cy="101" r="5" fill="none" /></>,
    <>{step(34, 90)}{no(99)}</>, <>{relay(17)}<Ln d="M115 31v22M108 60l7 36v20M112 54q8-10 4 8" /><X x={116} /><T x={104} y={108} /></>,
    <>{fuse(68)}<path d="M62 66h14l-7 14z" fill="#111" /></>, box('theta')],
  [<><Ln d="M61 27h12v14H61zM61 27l12 14M73 27L61 41M73 41l10 12" />{motor}</>, <>{knob(32, 90)}{no(99)}</>, <>{step(28, 86)}{nc(94)}</>,
    <>{relay(13)}<Ln d="M115 31v22M117 54v12h7M122 60l-8 36v22" /><X x={114} /><T x={124} y={108} /></>,
    <>{fuse(70)}<Ln d="M53 64L89 109" /></>, box('rings')],
  [no(77), <>{no(84)}{knob(17, 76)}<Ln d="M84 48h9M120 31v17h-10" />{lamp(102, 48, 9)}</>,
    <>{push(12, 66)}{no(76)}<Ln d="M109 33v34M109 101v34" />{lamp(109)}</>,
    <>{no(76)}<Ln d="M67 58h18" /><circle cx="76" cy="65" r="6" fill="none" /></>,
    <><Ln d="M29 31V69h10M37 62L66 104V137M65 31V69M56 84H90M82 66L119 112" />{fuse(100)}</>, null],
  [nc(64), <>{push(32, 90)}{no(99)}</>, <>{push(12, 66)}{nc(76)}<Ln d="M109 33v34M109 101v34" />{lamp(109)}</>,
    <>{knob(16, 72)}{no(81)}<Ln d="M72 58h18" /><circle cx="81" cy="65" r="6" fill="none" /><Ln d="M81 120h9M108 120h8v14" />{lamp(99, 120, 9)}</>,
    <>{mini(70)}{plugSym(70, 108)}<Ln d="M70 128v14" /></>, null],
  [co(86), <>{push(32, 52)}<Ln d="M52 84h8l8 6l8-6h14" />{no(100)}</>, <>{pull(36, 90)}{no(99)}</>, fuse(67),
    <><Ln d="M41 28V52h8M46 48L62 72V92M60 28v22M56 60h20" />{mini(84)}{plugSym(84, 108)}<Ln d="M84 128v14" /></>, null],
];

const br = (x: number): El => (
  <><Ln d={`M${x} 37V114M${x - 15} 56L${x + 3} 84M${x - 4} 48l4 8 4-8`} /><circle cx={x} cy="61" r="4" fill="none" /><X x={x} y={74} /><T x={x - 11} y={104} t="3" /></>
);
const contactor: El = (
  <>
    <Ln d="M33 51h13v13H33zM39 51v13M25 57H62M25 52v10M64 34v20M54 44l14 22M56 73h16v29H56zM40 64v30H56M40 80H56M64 64v9M64 102v14M56 88h16M60 77v6h8M58 92q6 10 12 0" />
    <X x={62} y={57} />
  </>
);
const board: Record<string, El> = {
  '0-0': br(55),
  '0-1': <><Ln d="M43 56h14v38H43zM50 37v19M50 94v20M39 62L64 99M46 46l10-4" /><X x={50} y={75} /><T x={60} y={51} t="4" /></>,
  '0-2': br(54),
  '0-3': <><Ln d="M25 58h17v21H25zM33 58v21M15 68H60M15 62v12M67 37v60M54 56l16 28M33 79v17H48M52 90h26q6 6 0 12H52q-8-6 0-12M67 102v12M60 44l7 8 7-8" /><X x={66} y={68} /><T x={58} y={92} t="4" /></>,
  '1-2': <><T x={36} y={54} t="3" /><Ln d="M42 46h12M54 34v20M48 38l6 8" /><circle cx="52" cy="76" r="22" fill="none" /><path d="M42 66l20 20M62 66L42 86" stroke="#d04a55" /><Ln d="M52 98v22" /></>,
  '1-3': contactor, '1-4': contactor, '1-5': contactor,
};
const terminal: El = (
  <g stroke="#888"><Ln d="M8 31h85v105H8zM8 45h85M8 63h85M8 80h85M8 108h85M43 38h17M43 54h17M43 71h17M46 91h11M46 102h11M43 123h17" /></g>
);
const SymbolArt = ({ w, h, children }: { w: number; h: number; children: React.ReactNode }) => (
  <svg width={w} height={h} viewBox={`0 0 ${w * 3} ${h * 3}`} stroke="#3c3c3c" strokeWidth="2.500" fill="none" fontFamily="Liberation Sans" aria-hidden="true">{children}</svg>
);

const Popup = styled.div`
  position: absolute;
  left: 700px;
  top: 87px;
  width: 480px;
  height: 372px;
  display: flex;
  border: 1px solid #8e8e8e;
  background: #eee;
  font-family: ${dialogFont};
`;
const PopupTree = styled.div`
  display: flex;
  flex-direction: column;
  width: 125px;
  flex: none;
  background: #fff;
  border-right: 2px solid #888;
  overflow: hidden;
  ul { border: 0; padding: 11px 0 0 2px; overflow: hidden; }
`;
const PopupScroll = styled(Scroll)`
  justify-content: space-between;
  padding: 0 4px;
  ${Thumb} { margin-right: 12px; }
`;
const Palette = styled.div`
  display: grid;
  grid-template-columns: repeat(6, 46px);
  grid-auto-rows: 55px;
  gap: 3px;
  padding: 2px 0 0 2px;
  align-content: start;
`;
const Cell = styled.button<{ $sel?: boolean }>`
  display: grid;
  place-items: center;
  border: 1px solid #8f8f8f;
  border-top-color: #fff;
  border-left-color: #fff;
  box-shadow: inset 1px 1px #eee, inset 2px 2px #999, inset -2px -2px #fff;
  ${p => p.$sel && css`border: 2px solid #3f86cc; box-shadow: inset 1px 1px #cfe2f5;`}
`;
const Cursor = styled.svg<{ $x: number; $y: number }>`
  position: absolute;
  left: ${p => p.$x}px;
  top: ${p => p.$y}px;
`;
const Pointer = ({ x, y }: { x: number; y: number }) => (
  <Cursor $x={x} $y={y} width="8" height="12" viewBox="0 0 8 12" aria-hidden="true">
    <path d="M.5.500v8.500l2-2 1.500 4 1.500-.6L4 6.500h3z" fill="#fff" stroke="#333" />
  </Cursor>
);

const menus = ['Plik', 'Edycja', 'Widok', 'Wstaw', 'Ustawienia', 'Narzędzia', 'Rysuj', 'Modelowanie', 'Wymiarowanie', 'Zmiana', 'Parametryzacja', 'Mechaniczne', 'Okno', 'Pomoc', 'Express',
  ...Array(9).fill('CP_Tools'), 'CADprofi', 'CP-Symbols'];
const modes: [string, boolean][] = [['464.5250, 354.9127, 0.0000', false], ['Standard', false], ['ISO', false], ['SKOK', true], ['SIATKA', true], ['ORTO', true], ['BIEGUN', true], ['PUNKTY', false], ['ŚLEDZENIE', false], ['SZEROKOŚĆ', true], ['MODEL', false], ['TABLET', true], ['DUCS', true], ['WYM', true], ['QUAD', true], ['1:1', false]];
const cols = Array.from({ length: 12 }, (_, i) => i);

const Drawing = () => (
  <svg width="944" height="556" viewBox="66 84 944 556" fill="none" fontFamily="'Liberation Sans', sans-serif">
    <path d="M143 560V198H900" stroke="#5a5a5a" /><path d="M170 560H900" stroke="#5a5a5a" />
    <path d="M900 547H167V210H900" stroke="#6b5470" />
    <path d="M179 246H330" stroke="#666" />
    <g fill="#e8e8e8" fontSize="6">
      <g textAnchor="middle"><text x="276" y="222">CADprofi</text><text x="276" y="231">ul. Struga 26/28</text><text x="276" y="239">26-600 Radom</text></g>
      <text x="211" y="289" fontSize="9" fontFamily="Roboto, sans-serif">DOKUMENTACJA ELEKTRYCZNA</text>
      <text x="175" y="326">Temat:</text><text x="232" y="338" fontSize="7">Projekt tablicy mieszkaniowej</text>
      <text x="175" y="391">Inwestor:</text><text x="175" y="421">Projektował:</text><text x="224" y="421">Jan Kowalski</text>
      <text x="175" y="452">Uwagi:</text><text x="175" y="522">Data</text><text x="175" y="533">2021-03-01</text>
      <path d="M224 389h4" stroke="#eee" strokeWidth="2" />
    </g>
    <path d="M143 510v30M163 560h30" stroke="#ddd" />
    <path d="M143 541h19M143 560h19" stroke="#9c2a2a" /><path d="M143 541v19M163 541v19" stroke="#2aa02a" />
    <path d="M139 496l4 5 4-5M143 501v6" stroke="#3a9a3a" /><path d="M198 555l8 9M206 555l-8 9" stroke="#a83232" />
    <path d="M139 557h7l-7 7h7" stroke="#2222b0" />
    <path d="M149 545l3 9 3-9 3 9 3-9" stroke="#ccc" />
  </svg>
);

const symRows: [number, string, boolean?][] = [[0, 'Symbole pionowe'], [1, 'Aparatura łączeniowa, sterownicza i'], [2, '1L (symbole jednokreskowe)', true], [2, '2L (symbole jednokreskowe)'], [2, '3L (symbole jednokreskowe)'], [2, '4L (symbole jednokreskowe)'], [2, 'nL (symbole jednokreskowe)'], [2, 'Cewki, przekaźniki (symbole jedn'], [2, 'Różne'], [1, 'Przyrządy pomiarowe'], [1, 'Wytwarzanie i przekształcanie energ']];

export default function App() {
  return (
    <Frame>
      <Global />
      <TitleBar>
        <Glyph name="brand" size={10} />
        <Title>BricsCAD Platinum (LICENCJA NIE DO ODSPRZEDAŻY) - [Rysunek1]</Title>
        <MdiButtons>
          {['min', 'max', 'close'].map(k => <WinButton key={k} type="button" aria-label={k}><WinGlyph kind={k} /></WinButton>)}
        </MdiButtons>
      </TitleBar>
      <MenuBar>
        <Glyph name="brand" size={9} />
        {menus.map((m, i) => <a key={i} href="#menu">{m}</a>)}
        <Push />
        <MdiButtons>
          {['min', 'max', 'close'].map(k => <WinButton key={k} $w={11} type="button" aria-label={k}><WinGlyph kind={k} /></WinButton>)}
        </MdiButtons>
      </MenuBar>
      <Row>
        <ToolBar tint={false} w={324} list="new open save | preview print plot | cut copy paste brush eyedrop selsim | del | undo redo | prop clip sheet note! help" />
        <ToolBar w={294} list="refresh | zoom zoomo zoom zoomo | pan eye ucs cam camd | cube cubeb | win page ask ask | d2 d3" />
        <ToolBar w={94} list="layp | laya laym | layx layb" />
        <ToolBar w={85} list="attach attach2 attach2 attachx attach2" />
        <ToolBar list="sigma gauge mesh mask | wire spoon tag lampy | bolt angle tick dia | yel table fan info | qdia lines | A pip xls | calc | logo q" />
      </Row>
      <Row>
        <Bar $w={527}>
          <Grip />
          <Items>
            <Tool type="button" aria-label="Warstwy"><Glyph name="layers" /></Tool>
            <Drop $flat $w={187}>
              {['bulb', 'sun', 'lock', 'printer', 'sw'].map(g => <Glyph key={g} name={g} size={10} />)}
              <select aria-label="Warstwa" defaultValue="0"><option>0</option></select><Down />
            </Drop>
            <Tools list="layg layers |" />
            <Drop $flat $w={79}><Glyph name="sw" size={10} /><select aria-label="Kolor" defaultValue="JakWarstwa"><option>JakWarstwa</option></select><Down /></Drop>
            <Drop $flat $w={98}><Stroke $w={35} /><select aria-label="Typ linii" defaultValue="JakWarstwa"><option>JakWarstwa</option></select><Down /></Drop>
            <Drop $flat $w={98}><Stroke $w={43} /><select aria-label="Szerokość linii" defaultValue="JakWarstwa"><option>JakWarstwa</option></select><Down /></Drop>
          </Items>
        </Bar>
        <ToolBar w={356} list="green | bolt angle valve | dia lines tick | steps tri sqrt box3 motor arc plug gnd fork cap plug dash rows cap target tube" />
        <ToolBar list="dark | waves yel stair bw redb redT table | fan dial pointer pointer target | info garr | dimk dimk pyr dimred" />
      </Row>
      <Row>
        <ToolBar tint={false} w={382} list="dim dima dimr | rad diam jog | base base2 base2 | brk brk2 | txt txts txts pm dotk | dimt dimt dimt dimt | paint paint2 paint2 paint" />
        <ToolBar w={254} list="snap! snape! snap dot perp par tan quad ins! pt! | cross snap ext | nosn | track snape" />
        <ToolBar w={400} end list="orange | beam sigma tie fan lines house | mesh bolt redb | valve bag tube pipe pipek tie | box3 tag arrow lines | rect2 frame rect2 | rectk pipek" />
      </Row>

      <Body>
        <SideBar $w={19}>
          <SideList list="~ line poly rct | arcg circ ell ella spl gdot | hatch hatch2 hatch3 blob wipe | cloud tbl bigA bigU ~ rct pent pent2 pent3 pig zed donut ~ ord | ordb ordb ordt ordt | ordt | abc" />
        </SideBar>
        <Center>
          <Canvas aria-label="Rysunek"><Drawing /></Canvas>
          <Tabs>
            {['M2 0v6M7 0L3 3l4 3z', 'M6 0L2 3l4 3z', 'M2 0l4 3-4 3z', 'M1 0l4 3-4 3zM6 0v6'].map(d => (
              <TabNav key={d} type="button" aria-label="Arkusz"><svg width="6" height="5" viewBox="0 0 8 6"><path d={d} fill="#111" stroke="#111" strokeWidth="1" /></svg></TabNav>
            ))}
            <span>&nbsp;\</span><Tab $on type="button">Model</Tab><span>/</span><Tab type="button">Layout1</Tab><span>\</span><Tab type="button">Layout2</Tab><span>/</span>
          </Tabs>
          <Row>
            <ToolBar tint={false} w={286} list="union subt inter | cubeb slab cubeb cubex cubea cubea | cubeg cubeb | cubec cubec | cubec cubeg cubeb cubeb slab" />
            <ToolBar w={217} list="cube cone wedge | cyl cone sph | tor rot cubeb mir | rot2 cubeb arr4" />
            <ToolBar w={212} list="cubeb cubec cubec slab cube cubed cubed cube cross | brick pen gauge" />
            <ToolBar w={112} list="dim bag cone A q | page page page" />
            <Bar />
          </Row>
          <Console>
            <ConsoleGrip>×</ConsoleGrip>
            <ConsoleText>
              <pre>{': cpxin\n>EL_SCHEM_EL'}</pre>
              <input aria-label="Wiersz poleceń" defaultValue=": cpx" />
            </ConsoleText>
            <ConsoleScroll>
              <svg width="5" height="3" viewBox="0 0 5 3"><path d="M0 3h5L2.500 0z" fill="#333" /></svg><Down />
            </ConsoleScroll>
          </Console>
        </Center>
        <SideBar $w={20}><SideList list="~ rot fan mir rot rot2 | hook hook fan mir" /></SideBar>
        <SideBar $w={21}><SideList list="~ arr4 cpy offs brush eyedrop rsz clip cut" /></SideBar>
        <Props>
          <PropsHead><svg width="5" height="5" viewBox="0 0 5 5"><path d="M0 0l5 5M5 0L0 5" stroke="#222" strokeWidth="1.200" /></svg></PropsHead>
          <PropsPick>
            <Drop><select aria-label="Selekcja" defaultValue="Brak Selekcji"><option>Brak Selekcji</option></select><Down /></Drop>
            <Tool type="button" aria-label="Filtr"><Glyph name="filter" /></Tool>
          </PropsPick>
          <PropTable>
            <colgroup><col /><col /><col /></colgroup>
            <tbody>
              <tr><td><Fold type="button" aria-label="Zwiń">−</Fold></td><th className="group" colSpan={2}>Ogólne</th></tr>
              <tr><td /><th>Kolor</th><td><Swatch />JakWarstwa</td></tr>
              <tr><td /><th>Warstwa</th><td>0</td></tr>
              <tr><td /><th>Typlinii</th><td><Stroke $w={46} />JakWarstwa</td></tr>
              <tr><td /><th>Skala dla obiektu</th><td>1</td></tr>
              <tr><td /><th>Szerokość linii</th><td><Stroke $w={58} />JakWarstwa</td></tr>
              <tr><td /><th className="group" colSpan={2} /></tr>
              {cols.slice(0, 8).map(i => <tr key={i}><td /><th /><td /></tr>)}
              <tr><td /><th className="group" colSpan={2} /></tr>
              <tr><td /><th /><td /></tr>
            </tbody>
          </PropTable>
        </Props>

        <FloatBar x={52} w={264} title="CADprofi" list="navy sheets | db | A num | pip xls | grid red glasses | qdia conn | house2! | logo q" />
        <FloatBar x={317} w={289} title="CADprofi - Edycja" list="pen bag leaf pen leaf | gnd | pen | bolt redT house pen redb redT | dial | wrench | smile swirl" />
        <FloatBar x={607} w={321} title="CADprofi - Instalacje elektryczne" list="flash | motor dial | arc dial gnd pyr | rect dimk | blackh xls dial sheet brown | mesh | leaf | bolt glasses roof" />

        <Dialog role="dialog" aria-label="Kreator i szablony schematów">
          <DialogTitle>
            <Glyph name="logo" size={10} /><span>Kreator i szablony schematów</span>
            <WinButton type="button" aria-label="Zamknij"><WinGlyph kind="close" /></WinButton>
          </DialogTitle>
          <DialogBody>
            <LeftCol>
              <DialogTools>
                <Handle />
                <Tool type="button" aria-label="Dodaj"><svg width="10" height="10" viewBox="0 0 10 10"><path d="M3.500 1h3v2.500H9v3H6.500V9h-3V6.500H1v-3h2.500z" fill="#f4e52c" stroke="#665f10" /></svg></Tool>
                <Tool type="button" aria-label="Widok"><svg width="10" height="9" viewBox="0 0 10 9"><path d="M.5.500h9v8h-9zM.5 2.500h9M2 4.500h2M2 6.500h2M5.500 4h2.500v3h-2.500z" fill="none" stroke="#aaa" /></svg></Tool>
                <Tool type="button" aria-label="Ulubione"><svg width="11" height="11" viewBox="0 0 11 11"><path d="M5.500.5L7 4l3.500.300-2.700 2.400.9 3.600-3.200-2-3.200 2 .9-3.600L.5 4.300 4 4z" fill="#f2c230" stroke="#a07c18" /></svg></Tool>
                <Tool type="button" aria-label="Usuń"><svg width="10" height="9" viewBox="0 0 10 9"><path d="M.5.500l9 8M9.500.5l-9 8" stroke="#999" strokeWidth="1.300" /></svg></Tool>
                <Tool type="button" aria-label="Tekst"><svg width="11" height="8" viewBox="0 0 11 8"><path d="M3 2V1h5v1M5.500 1v6M4.500 7h2M2 2.500L.5 4 2 5.500M9 2.500L10.500 4 9 5.500" fill="none" stroke="#333" /></svg></Tool>
              </DialogTools>
              <Tree>
                <TreeRow $depth={0}><Fold type="button" aria-label="Zwiń">−</Fold><Folder /><TreeLabel>Kreator schematów rozdziału energii (ISO)</TreeLabel></TreeRow>
                <TreeRow $depth={1} $bold><Leaf $w={7} /><Tick /><TreeLabel $soft>Kreator schematów</TreeLabel></TreeRow>
                {['Dane projektu - ustawienia ogólne', 'Tablica mieszkaniowa - przykład 1', 'Tablica mieszkaniowa - przykład 2'].map(t => (
                  <TreeRow key={t} $depth={1}><Leaf $w={7} /><Sym /><TreeLabel>{t}</TreeLabel></TreeRow>
                ))}
                {['ISO', 'ANSI', 'Schematy puszek instalacyjnych'].map(t => (
                  <TreeRow key={t} $depth={0}><Fold type="button" aria-label="Rozwiń">+</Fold><Folder /><TreeLabel>{t}</TreeLabel></TreeRow>
                ))}
                <TreeRow $depth={0}><Leaf $w={6} /><Folder /><TreeLabel>ABB</TreeLabel></TreeRow>
              </Tree>
              <Pair>
                <Check><input type="checkbox" />Sortuj</Check>
                <Check><input type="checkbox" />Normy</Check>
                <Check><input type="checkbox" defaultChecked />Oddzielna kategoria "Użytkownika"</Check>
              </Pair>
              <Groups>
                <Group>
                  <legend>Kąt</legend>
                  <GroupRow><Check><input type="radio" name="kat" />Obrót</Check></GroupRow>
                  <GroupRow $h={30}><Check><input type="radio" name="kat" defaultChecked />Kąt:</Check><Num aria-label="Kąt" defaultValue="0" /></GroupRow>
                </Group>
                <Group>
                  <legend>Widok</legend>
                  <GroupRow $h={10}><Check $off><input type="checkbox" disabled />Lustro X</Check></GroupRow>
                  <GroupRow $h={23}><Check $off><input type="checkbox" disabled />Lustro Y</Check></GroupRow>
                </Group>
              </Groups>
            </LeftCol>

            <RightCol>
              <SearchRow>
                <SearchBox><input aria-label="Szukaj" /><Down /></SearchBox>
                <svg width="11" height="11" viewBox="0 0 11 11"><path d="M6.500 6.500l4 4" stroke="#777" strokeWidth="2" /><circle cx="4.500" cy="4.500" r="3.500" fill="#cfe6f5" stroke="#7a97aa" /></svg>
                <Push />
                <Tool type="button" aria-label="Pomoc"><svg width="10" height="10" viewBox="0 0 10 10"><circle cx="5" cy="5" r="4.500" fill="#1518a8" /><path d="M3.500 3.700q1.500-2 3 0Q6.500 4.500 5 5.500M5 7v1" fill="none" stroke="#fff" /></svg></Tool>
              </SearchRow>
              <ColHead>{cols.map(c => <span key={c}>{c + 1}</span>)}</ColHead>
              <Board>
                {[0, 1, 2, 3, 4, 5].map(r => cols.map(c => (
                  <Slot key={`${r}-${c}`}>
                    {(r === 5 || board[`${r}-${c}`]) && <SymbolArt w={34} h={51}>{r === 5 ? terminal : board[`${r}-${c}`]}</SymbolArt>}
                  </Slot>
                )))}
              </Board>
              <EditRow>
                {cols.map(c => (
                  <span key={c}>
                    <button type="button" aria-label="Dodaj"><svg width="8" height="8" viewBox="0 0 8 8"><path d="M4 1v6M1 4h6" stroke="#128a4a" strokeWidth="2" /></svg></button>
                    <button type="button" aria-label="Usuń"><svg width="8" height="8" viewBox="0 0 8 8"><path d="M1 1l6 6M7 1L1 7" stroke="#b01840" strokeWidth="1.600" /></svg></button>
                  </span>
                ))}
              </EditRow>
              <Scroll><svg width="12" height="5" viewBox="0 0 12 5"><path d="M11 0v5L8 2.500z" fill="#333" /></svg><Thumb><Ribs /></Thumb></Scroll>
              <Lower>
                <Actions>
                  <Action type="button"><svg width="24" height="17" viewBox="0 0 24 17"><path d="M3 8V.5h12l5 5V16M15 .5v5h5M1 9h8V6.500l4 4-4 4V12H1z" fill="none" stroke="#3f9a48" /></svg>Wczytaj dane</Action>
                  <Action type="button"><svg width="14" height="16" viewBox="0 0 14 16"><path d="M6 7V1h2v6h4v3H2V7zM2 10l-1 5h11V10M4 15l1-3M8 15v-3" fill="none" stroke="#3f9a48" /></svg>Kopiuj symbol</Action>
                  <Action type="button"><svg width="24" height="17" viewBox="0 0 24 17"><path d="M3 7V.5h12l5 5V16M15 .5v5h5M14 9H6V6.500l-5 4 5 4V12h8z" fill="none" stroke="#44549c" /></svg>Zapisz dane</Action>
                  <Action type="button"><svg width="18" height="16" viewBox="0 0 18 16"><path d="M2 2l14 12M16 1L3 15" stroke="#b81842" strokeWidth="2.400" /></svg>Wyczyść wszystko</Action>
                  <Check><input type="checkbox" />Dołącz wczytane dane za ostatnim symbolem</Check>
                </Actions>
                <Options>
                  <Field $h={13}><Check><input type="checkbox" />Linia 'N' prowadzona</Check></Field>
                  <Field $h={13}><Check><input type="checkbox" />Dziel schemat na arkusze</Check></Field>
                  <Field $h={13}><Check><input type="checkbox" />Wstaw z ramką rysunkową</Check></Field>
                  <Field>Rozmiar arkusza<Drop $w={63}><select aria-label="Rozmiar arkusza" defaultValue="A3 - ISO"><option>A3 - ISO</option></select><Down /></Drop></Field>
                  <Field>Obszar schematu<Push /><Num aria-label="Szerokość" defaultValue="350" /><Push />x<Push /><Num aria-label="Wysokość" defaultValue="200" /></Field>
                </Options>
                <Finish>
                  <Field><span>Numerowanie<br />aparatów</span><Drop $w={70}><select aria-label="Numerowanie aparatów" defaultValue="Według obwodów"><option>Według obwodów</option></select><Down /></Drop></Field>
                  <Field>Numeruj obwody od:<Num aria-label="Numeruj obwody od" defaultValue="1" /></Field>
                  <Insert type="button"><Tick w={10} h={13} dark /><span>Wstaw</span><i /><Down /></Insert>
                </Finish>
              </Lower>
            </RightCol>
          </DialogBody>
        </Dialog>

        <Popup>
          <PopupTree>
            <Tree>
              {symRows.map(([d, t, sel]) => (
                <TreeRow key={t} $depth={d === 2 ? 1 : 0}>
                  {d > 0 && (sel ? <Tick w={10} h={9} /> : <Switchy />)}
                  <TreeLabel $sel={sel}>{t}</TreeLabel>
                </TreeRow>
              ))}
            </Tree>
            <PopupScroll>
              <svg width="3" height="5" viewBox="0 0 3 5"><path d="M3 0v5L0 2.500z" fill="#333" /></svg><Thumb $w={57}><Ribs /></Thumb>
              <svg width="3" height="5" viewBox="0 0 3 5"><path d="M0 0v5l3-2.500z" fill="#333" /></svg>
            </PopupScroll>
          </PopupTree>
          <Palette>
            {palette.map((row, r) => row.map((el, c) => el === null ? <span key={`${r}${c}`} /> : (
              <Cell key={`${r}${c}`} type="button" aria-label="Symbol" $sel={r === 1 && c === 0}><SymbolArt w={42} h={51}><g transform="translate(-6 -6)">{el}</g></SymbolArt></Cell>
            )))}
          </Palette>
        </Popup>
        <Pointer x={708} y={116} />
        <Pointer x={359} y={471} />
      </Body>
      <Status><span>Gotowe</span><Push />{modes.map(([t, off]) => <Mode key={t} $off={off}>{t}</Mode>)}<Down /></Status>
    </Frame>
  );
}
